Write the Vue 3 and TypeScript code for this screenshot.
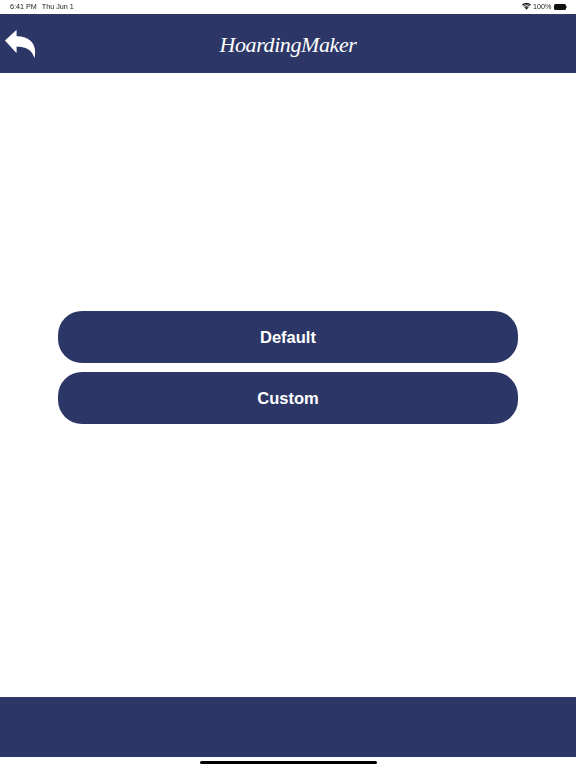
<script setup lang="ts">
const buttons: string[] = ['Default', 'Custom']
</script>

<template>
  <div class="page">
    <div class="status">
      <div class="status-left"><span>6:41 PM</span><span>Thu Jun 1</span></div>
      <div class="status-right">
        <svg class="wifi" width="9" height="7" viewBox="0 0 11 8">
          <path d="M5.5 8 3.7 5.9a2.6 2.6 0 0 1 3.6 0Z" fill="#111" />
          <path d="M2.8 4.9a4 4 0 0 1 5.4 0l-.7.8a3 3 0 0 0-4 0Z" fill="#111" />
          <path d="M1.3 3.3a6.2 6.2 0 0 1 8.4 0l-.8.8a5 5 0 0 0-6.8 0Z" fill="#111" />
          <path d="M0 1.8a8 8 0 0 1 11 0l-.8.9a6.9 6.9 0 0 0-9.4 0Z" fill="#111" />
        </svg>
        <span>100%</span>
        <span class="battery"><i class="cap"></i></span>
      </div>
    </div>
    <header class="header">
      <svg class="back" width="36" height="36" viewBox="0 0 36 36">
        <path d="M4 11.5 15.500 1v6.200C28 7.500 36.500 14 33.500 29 31 21 25 17.500 15.500 17.500v6.500Z" fill="#fff" />
      </svg>
      <div class="title">HoardingMaker</div>
    </header>
    <main class="main">
      <button v-for="b in buttons" :key="b" class="btn">{{ b }}</button>
    </main>
    <footer class="footer"></footer>
    <div class="home-area"><div class="home"></div></div>
  </div>
</template>

<style>
html, body { margin: 0; background: #fff; }
</style>

<style scoped>
.page {
  width: 576px;
  height: 768px;
  display: flex;
  flex-direction: column;
  overflow: hidden;
  font-family: "Liberation Sans", Arial, sans-serif;
  background: #fff;
}
.status {
  height: 13.500px;
  flex: none;
  display: flex;
  justify-content: space-between;
  align-items: center;
  padding: 0 10.500px 0 10px;
  font-size: 7.200px;
  color: #222;
  will-change: opacity;
}
.status-left { display: flex; gap: 5px; }
.status-right { display: flex; align-items: center; gap: 2px; }
.battery {
  position: relative;
  width: 12px;
  height: 6px;
  margin-left: 0;
  background: #111;
  border-radius: 1.500px;
}
.cap {
  position: absolute;
  right: -1.500px;
  top: 2px;
  width: 1px;
  height: 2px;
  background: #888;
}
.header {
  height: 59.500px;
  flex: none;
  background: #2d3767;
  display: flex;
  align-items: center;
  justify-content: center;
  position: relative;
}
.back {
  position: absolute;
  left: 1px;
  top: 15px;
  filter: drop-shadow(0 0.5px 0.5px rgba(255,255,255,0.4));
}
.title {
  font-family: "Liberation Serif", serif;
  font-style: italic;
  font-size: 22px;
  letter-spacing: -0.4px;
  color: #fff;
  padding-top: 3px;
}
.main {
  flex: 1;
  display: flex;
  flex-direction: column;
  align-items: center;
  gap: 9px;
  padding-top: 237.500px;
  box-sizing: border-box;
}
.btn {
  width: 460px;
  height: 52px;
  border: none;
  border-radius: 24px;
  background: #2d3767;
  color: #fff;
  font-family: "Liberation Sans", Arial, sans-serif;
  font-weight: 700;
  font-size: 16.500px;
  padding: 1px 0 0;
}
.footer {
  height: 59.500px;
  flex: none;
  background: #2d3767;
}
.home-area {
  height: 11.500px;
  flex: none;
  display: flex;
  justify-content: center;
  padding-top: 4px;
  box-sizing: border-box;
}
.home {
  width: 177px;
  height: 3px;
  border-radius: 2px;
  background: #000;
}
</style>
